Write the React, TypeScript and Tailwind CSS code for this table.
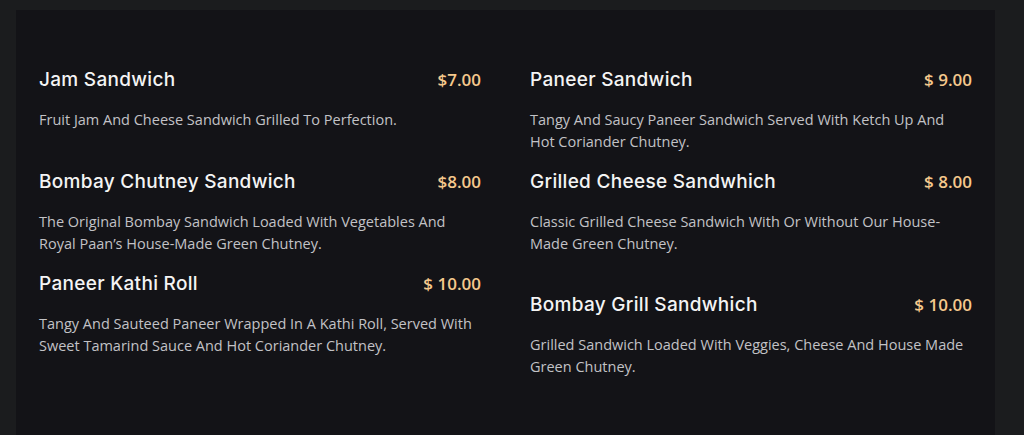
import React from "react";

type Item = { name: string; price: string; desc: string; extra?: boolean };

const items: Item[] = [
  { name: "Jam Sandwich", price: "$7.00", desc: "Fruit Jam And Cheese Sandwich Grilled To Perfection." },
  { name: "Paneer Sandwich", price: "$ 9.00", desc: "Tangy And Saucy Paneer Sandwich Served With Ketch Up And Hot Coriander Chutney." },
  { name: "Bombay Chutney Sandwich", price: "$8.00", desc: "The Original Bombay Sandwich Loaded With Vegetables And Royal Paan\u2019s House-Made Green Chutney." },
  { name: "Grilled Cheese Sandwhich", price: "$ 8.00", desc: "Classic Grilled Cheese Sandwich With Or Without Our House-Made Green Chutney." },
  { name: "Paneer Kathi Roll", price: "$ 10.00", desc: "Tangy And Sauteed Paneer Wrapped In A Kathi Roll, Served With Sweet Tamarind Sauce And Hot Coriander Chutney." },
  { name: "Bombay Grill Sandwhich", price: "$ 10.00", desc: "Grilled Sandwich Loaded With Veggies, Cheese And House Made Green Chutney.", extra: true },
];

function MenuItem({ item }: { item: Item }) {
  return (
    <div className={item.extra ? "mt-[21px]" : ""}>
      <div className="flex items-center justify-between h-[26px]">
        <span
          className="text-[19px] font-medium text-[#f4f4f4] tracking-[0.3px]"
          style={{ fontFamily: "Inter, 'Noto Sans', sans-serif" }}
        >
          {item.name}
        </span>
        <span
          className="text-[17px] font-semibold text-[#f5c88c]"
          style={{ fontFamily: "'Open Sans', sans-serif" }}
        >
          {item.price}
        </span>
      </div>
      <p
        className="mt-[16px] text-[14.5px] leading-[22px] text-[#c2c2c6] pr-[4px]"
        style={{ fontFamily: "'Open Sans', sans-serif" }}
      >
        {item.desc}
      </p>
    </div>
  );
}

export default function App() {
  return (
    <div className="w-[1024px] h-[435px] bg-[#1b1c1e] overflow-hidden pt-[10px] pl-[16px]">
      <div className="w-[979px] h-[425px] bg-[#131317] px-[23px] pt-[57px]">
        <div className="grid grid-cols-2 gap-x-[49px] gap-y-[16px] items-start">
          {items.map((it) => (
            <MenuItem key={it.name} item={it} />
          ))}
        </div>
      </div>
    </div>
  );
}
